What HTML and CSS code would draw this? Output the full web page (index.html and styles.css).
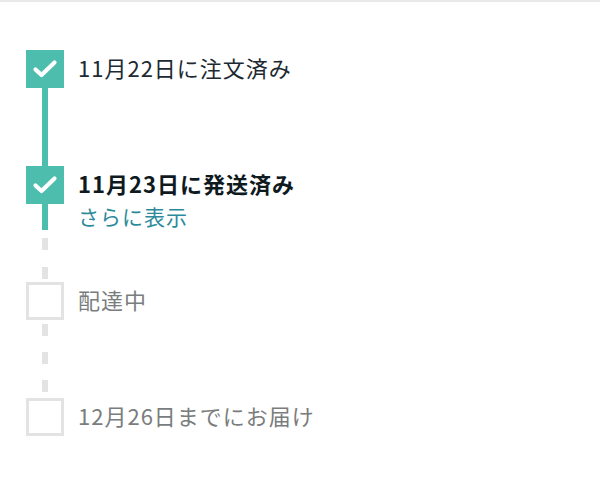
FILE: index.html
```html
<!DOCTYPE html>
<html lang="ja">
<head>
    <meta charset="UTF-8">
    <meta name="viewport" content="width=device-width, initial-scale=1.0">
    <title>配送状況</title>
    <link rel="stylesheet" href="styles.css">
</head>
<body>
    <div class="page">
        <ol class="tracker">
            <li class="step done">
                <div class="marker">
                    <span class="box">
                        <svg viewBox="0 0 38 38" width="38" height="38"><polyline points="9.5,19.5 15.5,25 28.5,12.5" /></svg>
                    </span>
                    <span class="rail rail-solid"></span>
                </div>
                <div class="label">
                    <p class="title">11月22日に注文済み</p>
                </div>
            </li>
            <li class="step done current">
                <div class="marker">
                    <span class="box">
                        <svg viewBox="0 0 38 38" width="38" height="38"><polyline points="9.5,19.5 15.5,25 28.5,12.5" /></svg>
                    </span>
                    <span class="rail rail-split"></span>
                </div>
                <div class="label">
                    <p class="title">11月23日に発送済み</p>
                    <a class="more" href="#">さらに表示</a>
                </div>
            </li>
            <li class="step">
                <div class="marker">
                    <span class="box"></span>
                    <span class="rail rail-dashed"></span>
                </div>
                <div class="label">
                    <p class="title">配達中</p>
                </div>
            </li>
            <li class="step last">
                <div class="marker">
                    <span class="box"></span>
                </div>
                <div class="label">
                    <p class="title">12月26日までにお届け</p>
                </div>
            </li>
        </ol>
    </div>
</body>
</html>
```

FILE: styles.css
```css
body {
    margin: 0;
    padding: 0;
    background: #ffffff;
    font-family: "Noto Sans CJK JP", "Noto Sans", sans-serif;
}

.page {
    border-top: 2px solid #e9e9e9;
    padding: 48px 0 0 26px;
}

.tracker {
    list-style: none;
    margin: 0;
    padding: 0;
}

.step {
    display: flex;
    align-items: stretch;
    height: 116px;
}

.step.last {
    height: 38px;
}

.marker {
    display: flex;
    flex-direction: column;
    align-items: center;
    width: 38px;
    flex-shrink: 0;
}

.box {
    display: block;
    width: 38px;
    height: 38px;
    box-sizing: border-box;
    border: 3px solid #e3e3e3;
    background: #ffffff;
}

.done .box {
    border: none;
    background: #4dbdae;
}

.box svg {
    display: block;
    fill: none;
    stroke: #ffffff;
    stroke-width: 4.2;
    stroke-linecap: round;
    stroke-linejoin: round;
}

.rail {
    display: block;
    width: 6px;
    flex: 1;
}

.rail-solid {
    background: #4dbdae;
}

/* teal stub under the shipped step, then the grey dashes */
.rail-split {
    background: linear-gradient(to bottom,
        #4dbdae 0 26px,
        transparent 26px 34px,
        #e3e3e3 34px 46px,
        transparent 46px 63px,
        #e3e3e3 63px 75px,
        transparent 75px);
}

.rail-dashed {
    background: repeating-linear-gradient(to bottom,
        transparent 0 4px,
        #e3e3e3 4px 16px,
        transparent 16px 28px);
}

.label {
    margin-top: -2px;
    padding-left: 14px;
}

.title {
    margin: 0;
    font-size: 22px;
    line-height: 38px;
    letter-spacing: 1px;
    color: #7a7d7d;
}

.done .title {
    color: #1d2a31;
}

.current .title {
    font-weight: bold;
    color: #0f1a1f;
}

.more {
    display: block;
    font-size: 21px;
    line-height: 28px;
    letter-spacing: 1px;
    color: #2c8a9b;
    text-decoration: none;
}
```
